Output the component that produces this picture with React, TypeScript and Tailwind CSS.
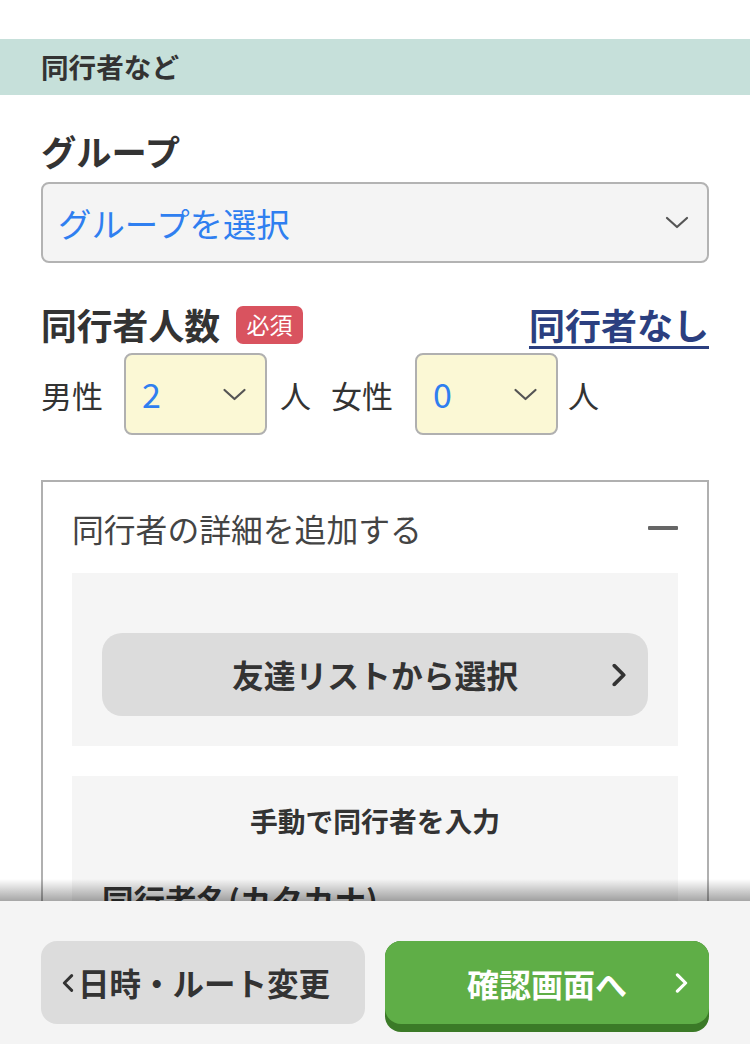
import React from 'react';

const Chevron = ({ className = '', dir = 'down' }: { className?: string; dir?: 'down' | 'right' | 'left' }) => {
  const d = dir === 'down' ? 'M2 2 L12 11 L22 2' : dir === 'right' ? 'M2 2 L11 11 L2 20' : 'M11 2 L2 11 L11 20';
  const vb = dir === 'down' ? '0 0 24 13' : '0 0 13 22';
  return (
    <svg viewBox={vb} className={className} fill="none" stroke="currentColor" strokeLinecap="round" strokeLinejoin="round">
      <path d={d} />
    </svg>
  );
};

const CountSelect = ({ value }: { value: string }) => (
  <div className="w-[143px] h-[82px] rounded-[8px] border-2 border-[#b0b0b0] bg-[#fbf8d5] flex items-center justify-between pl-[16px] pr-[18px]">
    <span className="text-[34px] leading-none text-[#2f7ff0]">{value}</span>
    <Chevron className="w-[25px] h-[13px] text-[#555] stroke-[2.2]" />
  </div>
);

export default function App() {
  return (
    <div className="relative w-full h-[1044px] overflow-hidden bg-white font-['Noto_Sans_CJK_JP','Noto_Sans',sans-serif] text-[#333]">
      <div className="pt-[39px]">
        <div className="h-[56px] bg-[#c6e0da] flex items-center px-[41px]">
          <h2 className="text-[27.6px] font-bold leading-none text-[#333]">同行者など</h2>
        </div>

        <div className="px-[41px]">
          {/* group */}
          <p className="mt-[35px] mb-[11px] text-[35.3px] leading-[41px] font-bold">グループ</p>
          <div className="h-[81px] rounded-[8px] border-2 border-[#b3b3b3] bg-[#f4f4f4] flex items-center justify-between pl-[15px] pr-[18px]">
            <span className="text-[33.4px] leading-none text-[#2f7ff0]">グループを選択</span>
            <Chevron className="w-[24px] h-[13px] text-[#555] stroke-[2.2]" />
          </div>

          {/* count */}
          <div className="mt-[41px] flex items-center justify-between h-[41px]">
            <div className="flex items-center">
              <span className="text-[35.8px] leading-[41px] font-bold">同行者人数</span>
              <span className="ml-[16px] h-[38px] w-[67px] rounded-[7px] bg-[#d9535f] text-white text-[23px] leading-none flex items-center justify-center">必須</span>
            </div>
            <a className="text-[36px] leading-[41px] font-bold text-[#2b3f80] underline underline-offset-[6px] decoration-[3px]">同行者なし</a>
          </div>

          <div className="mt-[8px] flex items-center text-[31px] leading-none text-[#333]">
            <span>男性</span>
            <div className="ml-[21px]"><CountSelect value="2" /></div>
            <span className="ml-[13px]">人</span>
            <span className="ml-[20px]">女性</span>
            <div className="ml-[22px]"><CountSelect value="0" /></div>
            <span className="ml-[10px]">人</span>
          </div>

          {/* accordion */}
          <div className="mt-[45px] border-2 border-[#b0b0b0] border-b-0 px-[29px] pb-[40px]">
            <div className="h-[91px] flex items-center justify-between">
              <span className="text-[31.8px] leading-[36px] text-[#444]">同行者の詳細を追加する</span>
              <span className="w-[30px] h-[4px] bg-[#666] rounded-[1px]" />
            </div>

            <div className="bg-[#f5f5f5] pt-[60px] pb-[30px] px-[30px]">
              <button className="relative w-full h-[83px] rounded-[20px] bg-[#dcdcdc] flex items-center justify-center">
                <span className="text-[31.8px] font-bold leading-none text-[#333]">友達リストから選択</span>
                <Chevron dir="right" className="absolute right-[22px] top-1/2 -translate-y-1/2 w-[14px] h-[23px] text-[#333] stroke-[3.5]" />
              </button>
            </div>

            <div className="mt-[30px] bg-[#f5f5f5] pt-[26px] px-[30px] pb-[40px]">
              <p className="text-center text-[27.8px] leading-[36px] font-bold text-[#333]">手動で同行者を入力</p>
              <p className="mt-[41px] text-[31.5px] leading-[40px] font-bold text-[#333]">同行者名(カタカナ)</p>
              <div className="mt-[12px] h-[81px] rounded-[8px] border-2 border-[#b3b3b3] bg-white" />
            </div>
          </div>
        </div>
      </div>

      {/* sticky footer */}
      <div className="absolute bottom-0 left-0 right-0 h-[143px] bg-[#f4f4f4]">
        <div className="absolute -top-[22px] left-0 right-0 h-[22px] bg-linear-to-b from-transparent to-black/35" />
        <div className="grid grid-cols-2 gap-[20px] px-[41px] pt-[40px]">
          <button className="h-[83px] rounded-[16px] bg-[#dcdcdc] flex items-center pl-[21px]">
            <Chevron dir="left" className="w-[12px] h-[18px] text-[#333] stroke-[3.5]" />
            <span className="ml-[4px] text-[31.5px] font-bold leading-none text-[#333] whitespace-nowrap">日時・ルート変更</span>
          </button>
          <button className="h-[91px] rounded-[16px] bg-[#3b7a27] pb-[8px]">
            <div className="relative h-[83px] rounded-[16px] bg-[#5fae47] flex items-center justify-center">
              <span className="text-[32px] font-bold leading-none text-white">確認画面へ</span>
              <Chevron dir="right" className="absolute right-[21px] top-1/2 -translate-y-1/2 w-[13px] h-[20px] text-white stroke-[3.5]" />
            </div>
          </button>
        </div>
      </div>
    </div>
  );
}
